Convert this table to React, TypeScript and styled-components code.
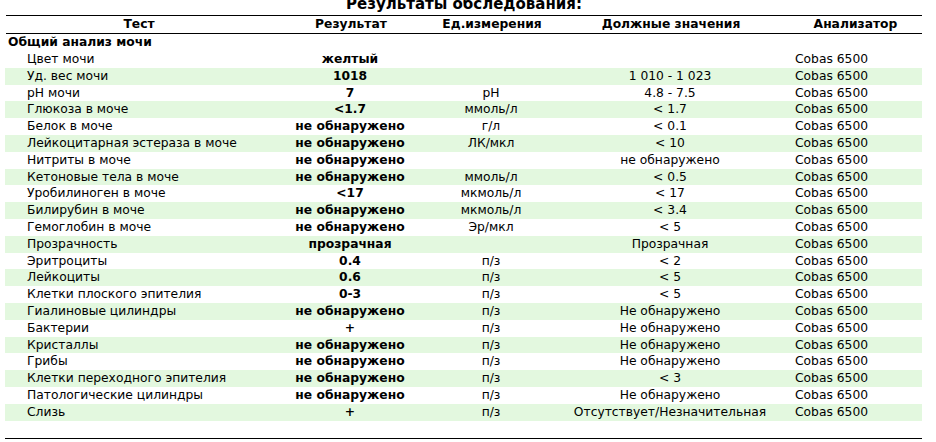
import React, { FC } from "react";
import styled, { createGlobalStyle } from "styled-components";

//styles
const GlobalStyle = createGlobalStyle`
    body {
        margin: 0;
        background: #ffffff;
        font-family: "DejaVu Sans", "Liberation Sans", sans-serif;
        color: #000000;
    }
`
const Page = styled.div`
    width: 917px;
    padding-left: 5px;
    overflow: hidden;
    height: 442px;
`
const Title = styled.div`
    font-size: 15px;
    font-weight: bold;
    text-align: center;
    line-height: 14px;
    height: 14px;
    margin: -3px 0 3.7px;
    padding-left: 1px;
`
const Columns = `
    display: grid;
    grid-template-columns: 266px 158px 124px 234px 135px;
`
const HeaderRow = styled.div`
    ${Columns}
    border-top: 1px solid #000;
    border-bottom: 1px solid #000;
    height: 17.6px;
    line-height: 17.6px;
    font-size: 12.3px;
    font-weight: bold;
    margin-left: 1px;
`
const HeadCell = styled.div`
    text-align: center;
`
const SectionRow = styled.div`
    height: 16.8px;
    line-height: 16.8px;
    font-size: 12.3px;
    font-weight: bold;
    padding-left: 3px;
`
const Row = styled.div<{ $striped: boolean }>`
    ${Columns}
    height: 16.8px;
    line-height: 17px;
    font-size: 12.3px;
    white-space: nowrap;
    background: ${(p) => (p.$striped ? "#e3f8df" : "transparent")};
`
const Name = styled.div`
    padding-left: 22px;
`
const Result = styled.div`
    text-align: center;
    font-weight: bold;
`
const Centered = styled.div`
    text-align: center;
`
const Analyzer = styled.div`
    padding-left: 8px;
`
const Rule = styled.div`
    margin-top: 17px;
    border-top: 1px solid #000;
`

interface Test {
    name: string;
    result: string;
    unit: string;
    norm: string;
}

const tests: Test[] = [
    { name: "Цвет мочи", result: "желтый", unit: "", norm: "" },
    { name: "Уд. вес мочи", result: "1018", unit: "", norm: "1 010 - 1 023" },
    { name: "pH мочи", result: "7", unit: "pH", norm: "4.8 - 7.5" },
    { name: "Глюкоза в моче", result: "<1.7", unit: "ммоль/л", norm: "< 1.7" },
    { name: "Белок в моче", result: "не обнаружено", unit: "г/л", norm: "< 0.1" },
    { name: "Лейкоцитарная эстераза в моче", result: "не обнаружено", unit: "ЛК/мкл", norm: "< 10" },
    { name: "Нитриты в моче", result: "не обнаружено", unit: "", norm: "не обнаружено" },
    { name: "Кетоновые тела в моче", result: "не обнаружено", unit: "ммоль/л", norm: "< 0.5" },
    { name: "Уробилиноген в моче", result: "<17", unit: "мкмоль/л", norm: "< 17" },
    { name: "Билирубин в моче", result: "не обнаружено", unit: "мкмоль/л", norm: "< 3.4" },
    { name: "Гемоглобин в моче", result: "не обнаружено", unit: "Эр/мкл", norm: "< 5" },
    { name: "Прозрачность", result: "прозрачная", unit: "", norm: "Прозрачная" },
    { name: "Эритроциты", result: "0.4", unit: "п/з", norm: "< 2" },
    { name: "Лейкоциты", result: "0.6", unit: "п/з", norm: "< 5" },
    { name: "Клетки плоского эпителия", result: "0-3", unit: "п/з", norm: "< 5" },
    { name: "Гиалиновые цилиндры", result: "не обнаружено", unit: "п/з", norm: "Не обнаружено" },
    { name: "Бактерии", result: "+", unit: "п/з", norm: "Не обнаружено" },
    { name: "Кристаллы", result: "не обнаружено", unit: "п/з", norm: "Не обнаружено" },
    { name: "Грибы", result: "не обнаружено", unit: "п/з", norm: "Не обнаружено" },
    { name: "Клетки переходного эпителия", result: "не обнаружено", unit: "п/з", norm: "< 3" },
    { name: "Патологические цилиндры", result: "не обнаружено", unit: "п/з", norm: "Не обнаружено" },
    { name: "Слизь", result: "+", unit: "п/з", norm: "Отсутствует/Незначительная" },
];

const App: FC = () => {
    return (
        <>
            <GlobalStyle />
            <Page>
                <Title>Результаты обследования:</Title>
                <HeaderRow>
                    <HeadCell>Тест</HeadCell>
                    <HeadCell>Результат</HeadCell>
                    <HeadCell>Ед.измерения</HeadCell>
                    <HeadCell>Должные значения</HeadCell>
                    <HeadCell>Анализатор</HeadCell>
                </HeaderRow>
                <SectionRow>Общий анализ мочи</SectionRow>
                {tests.map((t, i) => (
                    <Row key={t.name} $striped={i % 2 === 1}>
                        <Name>{t.name}</Name>
                        <Result>{t.result}</Result>
                        <Centered>{t.unit}</Centered>
                        <Centered>{t.norm}</Centered>
                        <Analyzer>Cobas 6500</Analyzer>
                    </Row>
                ))}
                <Rule />
            </Page>
        </>
    );
}

export default App;
